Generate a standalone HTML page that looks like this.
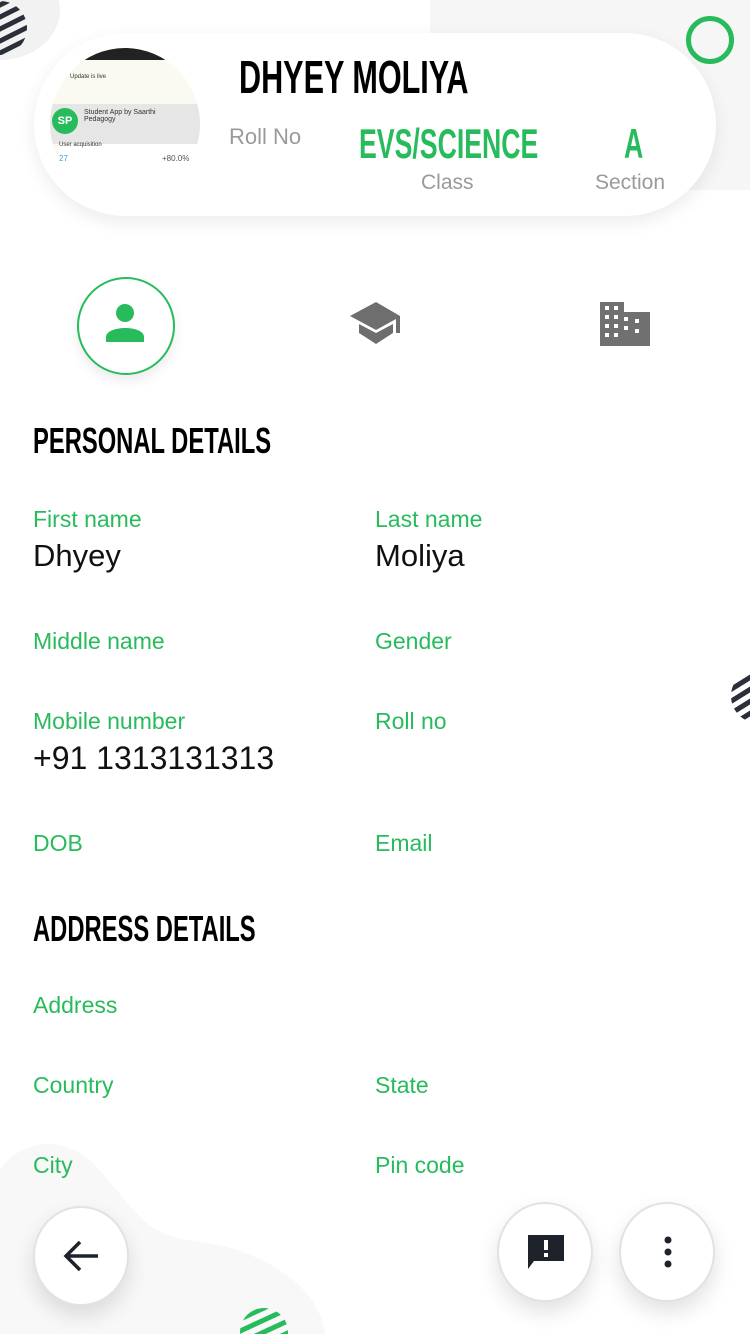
<!DOCTYPE html>
<html style="height:1334px;overflow:hidden"><head><style>
body{margin:0;width:750px;height:1334px;position:relative;overflow:hidden;background:#fff;font-family:"Liberation Sans",sans-serif}
.abs{position:absolute}
.cond{font-family:"Liberation Sans",sans-serif;font-weight:bold;transform-origin:left top;white-space:nowrap}
.lbl{position:absolute;color:#27bb5c;font-size:23px}
.val{position:absolute;color:#111;font-size:31px}
.btn{position:absolute;width:92px;height:96px;border-radius:50%;background:#fff;border:2px solid #e2e2e2;box-shadow:0 10px 22px rgba(0,0,0,.12)}
</style></head><body>
<div class="abs" style="left:430px;top:-60px;width:420px;height:250px;border-radius:0 0 0 140px;background:#f6f6f6"></div>
<div class="abs" style="left:-60px;top:-40px;width:120px;height:100px;border-radius:50%;background:#f2f2f2"></div>
<svg class="abs" style="left:0;top:0" width="30" height="60"><defs><clipPath id="c1"><circle cx="0" cy="28" r="27"/></clipPath></defs><g clip-path="url(#c1)" stroke="#2a2f3a" stroke-width="5"><path d="M-10 10L40-15M-10 22L40-3M-10 34L40 9M-10 46L40 21M-10 58L40 33M-10 70L40 45"/></g></svg>
<svg class="abs" style="left:730px;top:668px" width="20" height="56"><defs><clipPath id="c2"><circle cx="28" cy="28" r="27"/></clipPath></defs><g clip-path="url(#c2)" stroke="#2a2f3a" stroke-width="5"><path d="M0 10L40-15M0 22L40-3M0 34L40 9M0 46L40 21M0 58L40 33M0 70L40 45"/></g></svg>
<svg class="abs" style="left:0;top:1140px" width="330" height="194"><path d="M0 30C20 0 60-5 90 20C130 60 140 95 190 100C270 110 320 150 325 194H0z" fill="#f8f8f8"/></svg>
<svg class="abs" style="left:238px;top:1306px" width="52" height="28"><defs><clipPath id="c3"><circle cx="26" cy="26" r="24"/></clipPath></defs><g clip-path="url(#c3)" stroke="#27bb5c" stroke-width="5"><path d="M0 14L52-10M0 26L52 2M0 38L52 14M0 50L52 26"/></g></svg>
<div class="abs" style="left:686px;top:16px;width:38px;height:38px;border:5px solid #27bb5c;border-radius:50%"></div>
<div class="abs" style="left:34px;top:33px;width:682px;height:183px;border-radius:92px;background:#fff;box-shadow:0 6px 18px rgba(0,0,0,.08)"></div>
<div class="abs" style="left:50px;top:48px;width:150px;height:152px;border-radius:50%;overflow:hidden;background:#fafaf2">
 <div class="abs" style="left:35px;top:0;width:80px;height:12px;background:#222;border-radius:40px 40px 0 0"></div>
 <div class="abs" style="left:20px;top:26px;font-size:6px;color:#333">Update is live</div>
 <div class="abs" style="left:0;top:56px;width:150px;height:40px;background:#e6e6e6"></div>
 <div class="abs" style="left:2px;top:60px;width:26px;height:26px;border-radius:50%;background:#27bb5c;color:#fff;font-size:11px;font-weight:bold;text-align:center;line-height:26px">SP</div>
 <div class="abs" style="left:34px;top:61px;font-size:7px;color:#333;width:90px">Student App by Saarthi Pedagogy</div>
 <div class="abs" style="left:8px;top:96px;width:150px;height:60px;background:#fff"></div>
 <div class="abs" style="left:9px;top:94px;font-size:6px;color:#333">User acquisition</div>
 <div class="abs" style="left:9px;top:106px;font-size:8px;color:#3aa0e0">27</div>
 <div class="abs" style="left:112px;top:106px;font-size:8px;color:#555">+80.0%</div>
</div>
<div class="abs cond" style="left:239px;top:50px;font-size:46px;color:#000;transform:scaleX(0.665)">DHYEY MOLIYA</div>
<div class="abs" style="left:229px;top:124px;font-size:22px;color:#9a9a9a">Roll No</div>
<div class="abs cond" style="left:359px;top:120px;font-size:42px;color:#27bb5c;transform:scaleX(0.635)">EVS/SCIENCE</div>
<div class="abs" style="left:421px;top:171px;font-size:21px;color:#9a9a9a">Class</div>
<div class="abs cond" style="left:624px;top:120px;font-size:42px;color:#27bb5c;transform:scaleX(0.635)">A</div>
<div class="abs" style="left:595px;top:171px;font-size:21px;color:#9a9a9a">Section</div>
<div class="abs" style="left:77px;top:277px;width:94px;height:94px;border:2px solid #27bb5c;border-radius:50%;box-shadow:0 6px 12px rgba(0,0,0,.08);background:#fff"></div>
<svg class="abs" style="left:104px;top:302px" width="42" height="42" viewBox="0 0 42 42"><circle cx="21" cy="11" r="9" fill="#27bb5c"/><path d="M2 40v-5c0-6 10-9 19-9s19 3 19 9v5z" fill="#27bb5c"/></svg>
<svg class="abs" style="left:348px;top:302px" width="56" height="44" viewBox="0 0 56 44"><path d="M28 0L2 14l26 14 20-11v14h4V14z" fill="#6e6e6e"/><path d="M11 22v9l17 11 17-11v-9l-17 9z" fill="#6e6e6e"/></svg>
<svg class="abs" style="left:600px;top:302px" width="50" height="44" viewBox="0 0 50 44"><path d="M0 0h24v10h26v34H0z" fill="#707070"/><g fill="#fff"><rect x="5" y="4" width="4" height="4"/><rect x="14" y="4" width="4" height="4"/><rect x="5" y="13" width="4" height="4"/><rect x="14" y="13" width="4" height="4"/><rect x="5" y="22" width="4" height="4"/><rect x="14" y="22" width="4" height="4"/><rect x="5" y="31" width="4" height="4"/><rect x="14" y="31" width="4" height="4"/><rect x="24" y="15" width="4" height="4"/><rect x="24" y="24" width="4" height="4"/><rect x="35" y="17" width="4" height="4"/><rect x="35" y="27" width="4" height="4"/></g></svg>
<div class="abs cond" style="left:33px;top:420px;font-size:36px;color:#000;transform:scaleX(0.66)">PERSONAL DETAILS</div>
<div class="lbl" style="left:33px;top:506px">First name</div><div class="lbl" style="left:375px;top:506px">Last name</div>
<div class="val" style="left:33px;top:538px">Dhyey</div><div class="val" style="left:375px;top:538px">Moliya</div>
<div class="lbl" style="left:33px;top:628px">Middle name</div><div class="lbl" style="left:375px;top:628px">Gender</div>
<div class="lbl" style="left:33px;top:708px">Mobile number</div><div class="lbl" style="left:375px;top:708px">Roll no</div>
<div class="val" style="left:33px;top:740px;font-size:32px">+91 1313131313</div>
<div class="lbl" style="left:33px;top:830px">DOB</div><div class="lbl" style="left:375px;top:830px">Email</div>
<div class="abs cond" style="left:33px;top:908px;font-size:36px;color:#000;transform:scaleX(0.66)">ADDRESS DETAILS</div>
<div class="lbl" style="left:33px;top:992px">Address</div>
<div class="lbl" style="left:33px;top:1072px">Country</div><div class="lbl" style="left:375px;top:1072px">State</div>
<div class="lbl" style="left:33px;top:1152px">City</div><div class="lbl" style="left:375px;top:1152px">Pin code</div>
<div class="btn" style="left:33px;top:1206px"></div>
<svg class="abs" style="left:60px;top:1236px" width="40" height="40" viewBox="0 0 40 40"><path d="M38 20H6M20 6L6 20l14 14" stroke="#1d222b" stroke-width="3.5" fill="none"/></svg>
<div class="btn" style="left:497px;top:1202px"></div>
<svg class="abs" style="left:526px;top:1233px" width="40" height="40" viewBox="0 0 40 40"><path d="M2 2h36v26H8l-6 8z" fill="#1d222b"/><rect x="18" y="7" width="4" height="10" fill="#fff"/><rect x="18" y="20" width="4" height="4" fill="#fff"/></svg>
<div class="btn" style="left:619px;top:1202px"></div>
<svg class="abs" style="left:658px;top:1235px" width="20" height="34"><circle cx="10" cy="5" r="3.5" fill="#1d222b"/><circle cx="10" cy="17" r="3.5" fill="#1d222b"/><circle cx="10" cy="29" r="3.5" fill="#1d222b"/></svg>
</body></html>
